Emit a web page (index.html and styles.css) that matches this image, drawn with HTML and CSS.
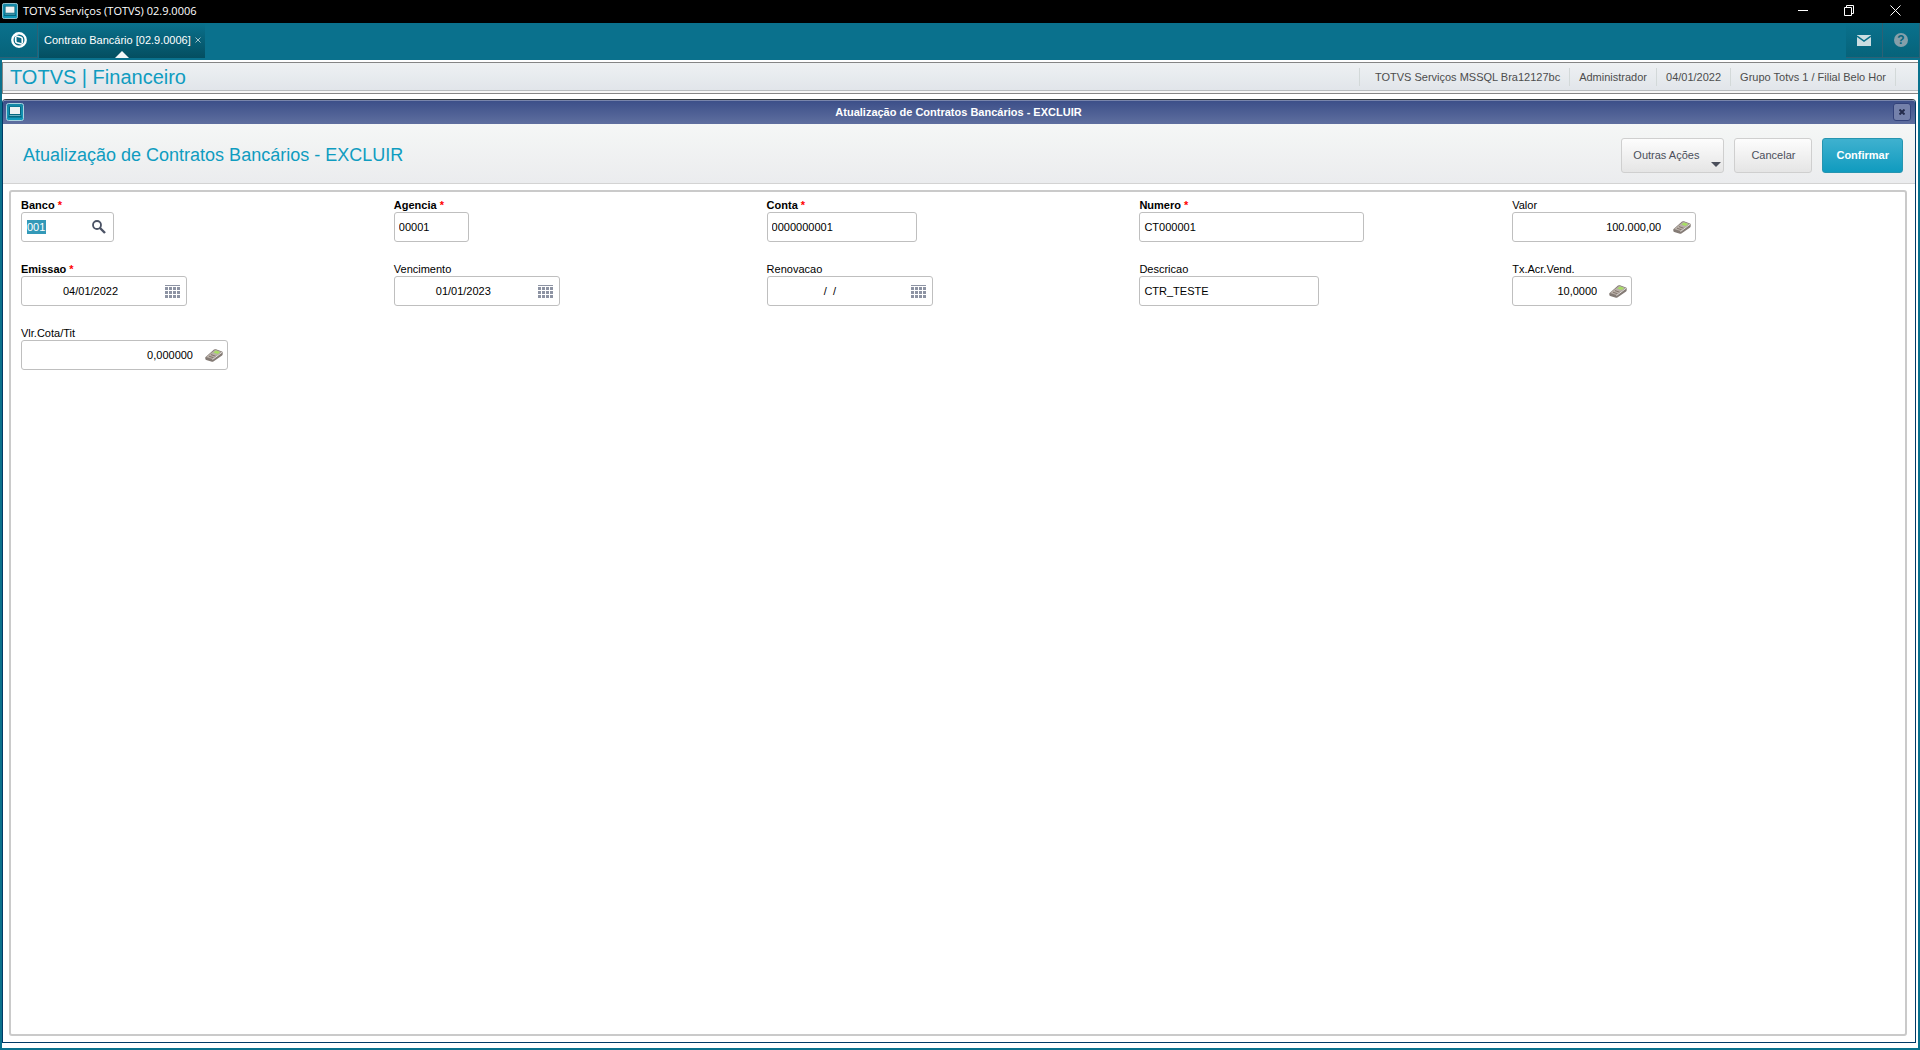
FILE: index.html
```
<!DOCTYPE html>
<html lang="pt-BR">
<head>
  <meta charset="UTF-8" />
  <meta name="viewport" content="width=device-width, initial-scale=1.0"/>
  <title>TOTVS Serviços (TOTVS) 02.9.0006</title>
  <link rel="stylesheet" href="styles.css">
</head>
<body>
  <!-- Shared icons -->
  <svg class="icon-defs" width="0" height="0" aria-hidden="true">
    <linearGradient id="appFill" x1="0" y1="0" x2="0" y2="1">
      <stop offset="0" stop-color="#1686a5"/>
      <stop offset="1" stop-color="#119bbd"/>
    </linearGradient>
    <symbol id="icon-app" viewBox="0 0 18 18">
      <rect x="0.5" y="0.5" width="17" height="17" rx="2" fill="url(#appFill)" stroke="#a9d3de"/>
      <path d="M3 3.5h12v8l1 3H2l1-3z" fill="#04667f"/>
      <path d="M4 4h10v7H4z" fill="#eef1f2"/>
      <path d="M3.5 12.5h11" stroke="#6fb2c4"/>
    </symbol>
    <symbol id="icon-calendar" viewBox="0 0 15 13">
      <path d="M0 .5h15" stroke="#8d93a3"/>
      <path d="M0 3.5h15M0 7.5h15M0 11.5h15" stroke="#8d93a3" stroke-width="3" stroke-dasharray="3 1"/>
    </symbol>
    <symbol id="icon-calc" viewBox="0 0 18 13">
      <path d="M.3 8.2L9 .6Q10 0 11 .3L17 2.6q.8.4.7 1.4v1.2q0 .6-.6 1.2L8.400 12.400q-.7.5-1.500.3L1.200 11Q.3 10.600.3 9.800z" fill="#847b75"/>
      <path d="M1 8L9.600 1.200Q10.300.8 11 1l5.500 2-9 6.900z" fill="#b9b0a8"/>
      <path d="M8.400 3.500l2.500-2 4.300 1.500-2.500 2z" fill="#a6df62"/>
      <path d="M4 7.200l4.600 1.600M6 5.600l4.600 1.600" stroke="#83756d"/>
      <path d="M7.500 10.500l9.500-7.200" stroke="#e2dedb"/>
    </symbol>
  </svg>

  <!-- Operating system title bar -->
  <header class="os-bar">
    <svg class="os-icon"><use href="#icon-app"/></svg>
    <span class="os-title">TOTVS Serviços (TOTVS) 02.9.0006</span>
    <button class="os-button" aria-label="Minimizar">
      <svg width="11" height="11"><path d="M0 5.5h10" stroke="#fff"/></svg>
    </button>
    <button class="os-button" aria-label="Restaurar">
      <svg width="11" height="11" fill="none" stroke="#fff"><path d="M.5 2.5h7v8h-7zM2.5 2.5v-2h7v8h-2"/></svg>
    </button>
    <button class="os-button" aria-label="Fechar">
      <svg width="11" height="11"><path d="M.5 .5l10 10M10.5 .5l-10 10" stroke="#fff"/></svg>
    </button>
  </header>

  <!-- Program tabs -->
  <nav class="tab-bar">
    <button class="home-button" aria-label="Menu">
      <svg width="16" height="16" viewBox="0 0 16 16" fill="none" stroke="#fff">
        <circle cx="8" cy="8" r="6.7" stroke-width="2.4"/>
        <path d="M3.500 3.500L10 5.200Q11.300 5.600 11.300 7v4M12.500 12.500L6 10.800Q4.700 10.400 4.700 9V5" stroke-width="1.700"/>
      </svg>
    </button>
    <div class="tab">
      <a class="tab-link" href="#">Contrato Bancário [02.9.0006]</a>
      <button class="tab-close" aria-label="Fechar aba">
        <svg width="6" height="6"><path d="M.5 .5l5 5M5.5 .5l-5 5" stroke="#a4c5cd"/></svg>
      </button>
    </div>
    <div class="tab-tools">
      <button class="tool-button" aria-label="Mensagens">
        <svg width="14" height="11"><path d="M0 0h14v11H0z" fill="#ccdde1"/><path d="M0 1l7 5 7-5" fill="none" stroke="#086f88" stroke-width="1.5"/></svg>
      </button>
      <button class="tool-button" aria-label="Ajuda"><span class="help-mark">?</span></button>
    </div>
  </nav>

  <main class="workspace">
    <div class="status-bar">
      <span class="module-name">TOTVS | Financeiro</span>
      <ul class="status-list">
        <li>TOTVS Serviços MSSQL Bra12127bc</li>
        <li>Administrador</li>
        <li>04/01/2022</li>
        <li>Grupo Totvs 1 / Filial Belo Hor</li>
      </ul>
    </div>

    <section class="window">
      <div class="window-bar">
        <svg class="window-icon"><use href="#icon-app"/></svg>
        <span class="window-title">Atualização de Contratos Bancários - EXCLUIR</span>
        <button class="window-close" aria-label="Fechar">
          <svg width="6" height="6"><path d="M.5 .5l5 5M5.5 .5l-5 5" stroke="#242c4c" stroke-width="2"/></svg>
        </button>
      </div>

      <div class="form-header">
        <h1>Atualização de Contratos Bancários - EXCLUIR</h1>
        <button class="action menu">Outras Ações</button>
        <button class="action">Cancelar</button>
        <button class="action primary">Confirmar</button>
      </div>

      <form class="form-panel">
        <div class="field required">
          <label for="banco">Banco</label>
          <div class="box w-banco">
            <!-- value is shown as selected text -->
            <input id="banco" class="selected" type="text" value="001" />
            <button type="button" class="box-button" aria-label="Pesquisar">
              <svg width="14" height="14" fill="none" stroke="#4b5365"><circle cx="5" cy="5" r="4" stroke-width="1.8"/><path d="M8 8l5 5" stroke-width="2.4"/></svg>
            </button>
          </div>
        </div>
        <div class="field required">
          <label for="agencia">Agencia</label>
          <div class="box w-agencia"><input id="agencia" type="text" value="00001" /></div>
        </div>
        <div class="field required">
          <label for="conta">Conta</label>
          <div class="box w-conta"><input id="conta" type="text" value="0000000001" /></div>
        </div>
        <div class="field required">
          <label for="numero">Numero</label>
          <div class="box w-numero"><input id="numero" type="text" value="CT000001" /></div>
        </div>
        <div class="field">
          <label for="valor">Valor</label>
          <div class="box number w-valor">
            <input id="valor" type="text" value="100.000,00" />
            <button type="button" class="box-button" aria-label="Calculadora"><svg width="18" height="13"><use href="#icon-calc"/></svg></button>
          </div>
        </div>

        <div class="field required">
          <label for="emissao">Emissao</label>
          <div class="box date">
            <input id="emissao" type="text" value="04/01/2022" />
            <button type="button" class="box-button" aria-label="Calendário"><svg width="15" height="13"><use href="#icon-calendar"/></svg></button>
          </div>
        </div>
        <div class="field">
          <label for="vencimento">Vencimento</label>
          <div class="box date">
            <input id="vencimento" type="text" value="01/01/2023" />
            <button type="button" class="box-button" aria-label="Calendário"><svg width="15" height="13"><use href="#icon-calendar"/></svg></button>
          </div>
        </div>
        <div class="field">
          <label for="renovacao">Renovacao</label>
          <div class="box date">
            <input id="renovacao" type="text" value="/  /    " />
            <button type="button" class="box-button" aria-label="Calendário"><svg width="15" height="13"><use href="#icon-calendar"/></svg></button>
          </div>
        </div>
        <div class="field">
          <label for="descricao">Descricao</label>
          <div class="box w-descricao"><input id="descricao" type="text" value="CTR_TESTE" /></div>
        </div>
        <div class="field">
          <label for="taxa">Tx.Acr.Vend.</label>
          <div class="box number w-taxa">
            <input id="taxa" type="text" value="10,0000" />
            <button type="button" class="box-button" aria-label="Calculadora"><svg width="18" height="13"><use href="#icon-calc"/></svg></button>
          </div>
        </div>

        <div class="field">
          <label for="cota">Vlr.Cota/Tit</label>
          <div class="box number w-cota">
            <input id="cota" type="text" value="0,000000" />
            <button type="button" class="box-button" aria-label="Calculadora"><svg width="18" height="13"><use href="#icon-calc"/></svg></button>
          </div>
        </div>
      </form>
    </section>
  </main>
</body>
</html>
```
FILE: styles.css
```
* {
  box-sizing: border-box;
}

body {
  margin: 0;
  min-height: 100vh;
  display: flex;
  flex-direction: column;
  font-family: "Liberation Sans", Arial, sans-serif;
  font-size: 11px;
  color: #000;
  background: #0a718d;
}

button {
  font: inherit;
  padding: 0;
  border: none;
  background: none;
  cursor: pointer;
}

svg {
  display: block;
}

.icon-defs {
  position: absolute;
}

/* Operating system bar */
.os-bar {
  display: flex;
  align-items: center;
  height: 23px;
  padding: 0 2px 2px;
  background: #000;
  color: #fff;
}

.os-icon {
  width: 16px;
  height: 16px;
}

.os-title {
  flex: 1;
  margin-left: 5px;
  font-family: "Open Sans", "Noto Sans", sans-serif;
  font-size: 11px;
}

.os-button {
  width: 46px;
  height: 20px;
  display: flex;
  align-items: center;
  justify-content: center;
}

/* Tabs */
.tab-bar {
  display: flex;
  height: 37px;
  padding-bottom: 2px;
}

.home-button {
  width: 38px;
  display: flex;
  align-items: center;
  justify-content: center;
  border-right: 1px solid #2c6175;
  border-bottom: 1px solid #2c6175;
  background: linear-gradient(#0a718d, #06637a);
}

.tab {
  position: relative;
  display: flex;
  align-items: center;
  gap: 4px;
  margin-left: 1px;
  padding: 0 4px 2px 5px;
  background: linear-gradient(#0a718d, #044e60);
}

.tab::after {
  content: "";
  position: absolute;
  bottom: 0;
  left: 50%;
  margin-left: -7px;
  border: 7px solid transparent;
  border-top: 0;
  border-bottom-color: #f4f7f8;
}

.tab-link {
  color: #fff;
  text-decoration: none;
}

.tab-tools {
  display: flex;
  margin-left: auto;
}

.tool-button {
  width: 37px;
  display: flex;
  align-items: center;
  justify-content: center;
  border-right: 1px solid #2c6175;
  border-bottom: 1px solid #2c6175;
  background: linear-gradient(#0a718d, #06637a);
}

.help-mark {
  width: 14px;
  height: 14px;
  border-radius: 50%;
  background: #859faa;
  color: #07657d;
  font-size: 12px;
  font-weight: bold;
  line-height: 14px;
}

/* Workspace */
.workspace {
  flex: 1;
  display: flex;
  flex-direction: column;
  margin: 0 2px 2px;
  padding-top: 2px;
  background: #fff;
}

.status-bar {
  display: flex;
  align-items: center;
  height: 32px;
  padding: 0 22px 2px 7px;
  border: 1px solid #858585;
  border-right: 0;
  background: linear-gradient(#eef1f3, #e0e4e9);
  box-shadow: inset 0 -2px #f6f6f6, inset 0 -3px #b9bdc0;
}

.module-name {
  flex: 1;
  font-size: 20px;
  color: #0f9cc0;
}

.status-list {
  display: flex;
  margin: 0;
  padding: 0;
  list-style: none;
  border-left: 1px solid #d3d9d9;
  color: #4d4d4d;
}

.status-list li {
  padding: 0 9px;
  border-right: 1px solid #d3d9d9;
  line-height: 18px;
}

.status-list li:first-child {
  padding-left: 15px;
}

/* Window */
.window {
  flex: 1;
  display: flex;
  flex-direction: column;
  margin: 5px 2px 5px 0;
  border: 1px solid #003a66;
  border-top-color: #333a3f;
  border-radius: 4px 4px 0 0;
  overflow: hidden;
}

.window-bar {
  display: flex;
  align-items: center;
  height: 24px;
  padding: 0 4px 1px 3px;
  border-top: 1px solid #7985ab;
  background: linear-gradient(#3c4f89, #5f6f9f);
  color: #fff;
}

.window-icon {
  width: 18px;
  height: 18px;
}

.window-title {
  flex: 1;
  text-align: center;
  font-weight: bold;
}

.window-close {
  width: 18px;
  height: 18px;
  display: flex;
  align-items: center;
  justify-content: center;
  border: 1px solid #33427a;
  border-radius: 3px;
  background: #7481ab;
}

.form-header {
  display: flex;
  align-items: center;
  gap: 10px;
  height: 60px;
  padding: 3px 12px 0 20px;
  border-bottom: 1px solid #d3d3d3;
  background: linear-gradient(#f5f7f6, #ebecee);
}

.form-header h1 {
  flex: 1;
  margin: 0;
  font-size: 18px;
  font-weight: normal;
  color: #0f9cc0;
}

.action {
  height: 35px;
  padding: 0 16px;
  border: 1px solid #cfcfcf;
  border-radius: 3px;
  background: linear-gradient(#fdfdfd, #e5e5e5);
  color: #4b4f5b;
}

.action.menu {
  position: relative;
  padding: 0 24px 0 11px;
}

.action.menu::after {
  content: "";
  position: absolute;
  right: 2px;
  bottom: 5px;
  border: 5px solid transparent;
  border-top-color: #4b4f5b;
  border-bottom: 0;
}

.action.primary {
  padding: 0 13px;
  border-color: #2695b0;
  background: linear-gradient(#3fb1cf, #109bbf);
  color: #fff;
  font-weight: bold;
}

/* Form */
.form-panel {
  flex: 1;
  display: grid;
  grid-template-columns: repeat(5, 1fr);
  grid-auto-rows: 44px;
  row-gap: 20px;
  margin: 6px 8px 6px 6px;
  padding: 6px 20px 0 10px;
  border: 2px solid #cacaca;
  border-radius: 3px;
}

.field label {
  display: block;
  height: 14px;
  line-height: 14px;
}

.required label {
  font-weight: bold;
}

.required label::after {
  content: " *";
  color: #f00;
}

.box {
  display: flex;
  align-items: center;
  height: 30px;
  padding: 0 4px;
  border: 1px solid #bfbfbf;
  border-radius: 3px;
  background: #fff;
}

.box input {
  flex: 1;
  min-width: 0;
  height: 16px;
  padding: 0;
  border: none;
  outline: none;
  background: none;
  font: inherit;
  color: #000;
}

.box input.selected {
  flex: none;
  width: 19px;
  margin: 0 auto 0 1px;
  height: 14px;
  background: #3399b8;
  color: #fff;
}

.box-button {
  flex: none;
}

.w-banco { width: 93px; padding-right: 7px; }
.w-agencia { width: 75px; }
.w-conta { width: 150px; }
.w-numero { width: 225px; }
.w-valor { width: 184px; }
.w-descricao { width: 180px; }
.w-taxa { width: 120px; }
.w-cota { width: 207px; }

.box.number {
  gap: 12px;
}

.number input {
  text-align: right;
}

.box.date {
  width: 166px;
  gap: 10px;
  padding-right: 6px;
}

.date input {
  text-align: center;
  white-space: pre;
}
```
